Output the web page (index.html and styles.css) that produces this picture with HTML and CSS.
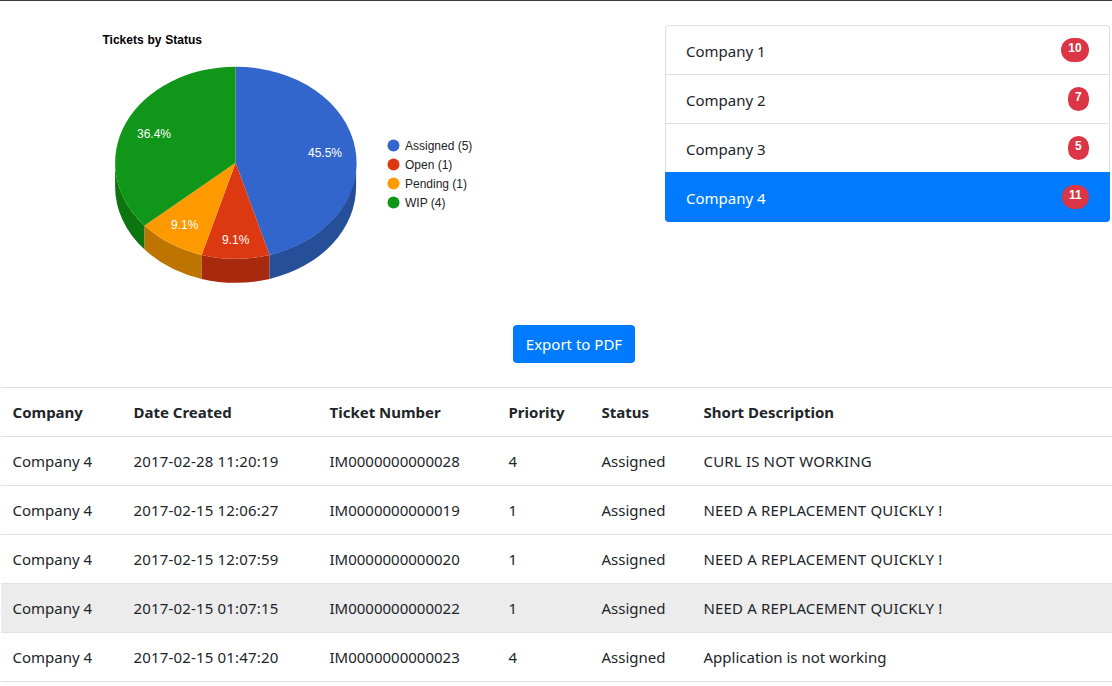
FILE: index.html
```html
<!DOCTYPE html>
<html>
<head>
    <title>Tickets by Status</title>
    <link rel="stylesheet" href="styles.css">
</head>
<body>
    <div class="top-section">
        <svg class="chart" width="640" height="300" viewBox="0 0 640 300">
            <text class="chart-title" x="102.500" y="44" word-spacing="0.5">Tickets by Status</text>

            <!-- pie sides -->
            <path fill="#0c7510" d="M115.1 162.7 A120.5 96 0 0 0 144.6 225.6 V249.6 A120.5 96 0 0 1 115.1 186.7 Z"/>
            <path fill="#bd7500" d="M144.6 225.6 A120.5 96 0 0 0 201.7 254.9 V278.9 A120.5 96 0 0 1 144.6 249.6 Z"/>
            <path fill="#a72a0e" d="M201.7 254.9 A120.5 96 0 0 0 269.6 254.9 V278.9 A120.5 96 0 0 1 201.7 278.9 Z"/>
            <path fill="#264f99" d="M269.6 254.9 A120.5 96 0 0 0 356.1 162.7 V186.7 A120.5 96 0 0 1 269.6 278.9 Z"/>

            <!-- pie top -->
            <path fill="#3366cc" d="M235.6 162.7 V66.7 A120.5 96 0 0 1 269.6 254.9 Z"/>
            <path fill="#dc3912" d="M235.6 162.7 L269.6 254.9 A120.5 96 0 0 1 201.7 254.9 Z"/>
            <path fill="#ff9900" d="M235.6 162.7 L201.7 254.9 A120.5 96 0 0 1 144.6 225.6 Z"/>
            <path fill="#109618" d="M235.6 162.7 L144.6 225.6 A120.5 96 0 0 1 235.6 66.7 Z"/>

            <text class="slice-label" x="308" y="157">45.5%</text>
            <text class="slice-label" x="222" y="244">9.1%</text>
            <text class="slice-label" x="171" y="229">9.1%</text>
            <text class="slice-label" x="137" y="138">36.4%</text>

            <circle cx="393.500" cy="145.500" r="6" fill="#3366cc"/>
            <text class="legend-label" x="405" y="150">Assigned (5)</text>
            <circle cx="393.500" cy="164.500" r="6" fill="#dc3912"/>
            <text class="legend-label" x="405" y="169">Open (1)</text>
            <circle cx="393.500" cy="183.500" r="6" fill="#ff9900"/>
            <text class="legend-label" x="405" y="188">Pending (1)</text>
            <circle cx="393.500" cy="202.500" r="6" fill="#109618"/>
            <text class="legend-label" x="405" y="207">WIP (4)</text>
        </svg>

        <ul class="company-list">
            <li class="company-item"><span class="company-name">Company 1</span> <span class="badge">10</span></li>
            <li class="company-item"><span class="company-name">Company 2</span> <span class="badge">7</span></li>
            <li class="company-item"><span class="company-name">Company 3</span> <span class="badge">5</span></li>
            <li class="company-item active"><span class="company-name">Company 4</span> <span class="badge">11</span></li>
        </ul>
    </div>

    <div class="export-row">
        <button class="export-btn" type="button">Export to PDF</button>
    </div>

    <table class="ticket-table">
        <thead>
            <tr>
                <th class="col-company">Company</th>
                <th class="col-date">Date Created</th>
                <th class="col-number">Ticket Number</th>
                <th class="col-priority">Priority</th>
                <th class="col-status">Status</th>
                <th>Short Description</th>
            </tr>
        </thead>
        <tbody>
            <tr>
                <td>Company 4</td>
                <td class="spaced">2017-02-28 11:20:19</td>
                <td>IM0000000000028</td>
                <td>4</td>
                <td>Assigned</td>
                <td class="spaced">CURL IS NOT WORKING</td>
            </tr>
            <tr>
                <td>Company 4</td>
                <td class="spaced">2017-02-15 12:06:27</td>
                <td>IM0000000000019</td>
                <td>1</td>
                <td>Assigned</td>
                <td class="spaced">NEED A REPLACEMENT QUICKLY !</td>
            </tr>
            <tr>
                <td>Company 4</td>
                <td class="spaced">2017-02-15 12:07:59</td>
                <td>IM0000000000020</td>
                <td>1</td>
                <td>Assigned</td>
                <td class="spaced">NEED A REPLACEMENT QUICKLY !</td>
            </tr>
            <tr class="hovered">
                <td>Company 4</td>
                <td class="spaced">2017-02-15 01:07:15</td>
                <td>IM0000000000022</td>
                <td>1</td>
                <td>Assigned</td>
                <td class="spaced">NEED A REPLACEMENT QUICKLY !</td>
            </tr>
            <tr>
                <td>Company 4</td>
                <td class="spaced">2017-02-15 01:47:20</td>
                <td>IM0000000000023</td>
                <td>4</td>
                <td>Assigned</td>
                <td>Application is not working</td>
            </tr>
        </tbody>
    </table>
</body>
</html>
```

FILE: styles.css
```css
body {
    font-family: "Noto Sans", sans-serif;
    font-size: 15px;
    color: #212529;
    margin: 0;
    padding: 0;
    border-top: 1px solid #343a40;
    overflow: hidden;
    height: 685px;
}

.top-section {
    display: flex;
    justify-content: space-between;
    height: 324px;
    padding-right: 2px;
}

.chart {
    display: block;
    margin-top: -1px;
}

.chart-title {
    font-family: "Liberation Sans", sans-serif;
    font-size: 12px;
    font-weight: bold;
    fill: #000000;
}

.slice-label {
    font-family: "Liberation Sans", sans-serif;
    font-size: 12px;
    fill: #ffffff;
}

.legend-label {
    font-family: "Liberation Sans", sans-serif;
    font-size: 12px;
    fill: #222222;
}

.company-list {
    list-style: none;
    width: 445px;
    height: 197px;
    box-sizing: border-box;
    margin: 24px 0 0;
    padding: 0;
    border: 1px solid #dfdfdf;
    border-bottom: none;
    border-radius: 4px;
}

.company-item {
    display: flex;
    justify-content: space-between;
    align-items: center;
    box-sizing: border-box;
    height: 49px;
    padding: 0 20px;
    border-bottom: 1px solid #dfdfdf;
}

.company-item.active {
    background-color: #007bff;
    color: #ffffff;
    border-bottom: none;
    border-radius: 0 0 4px 4px;
    margin: -1px -1px 0;
    height: 50px;
    padding: 0 21px;
}

.company-name {
    margin-top: 2px;
}

.badge {
    font-family: "Liberation Sans", sans-serif;
    font-size: 12px;
    font-weight: bold;
    line-height: 20px;
    color: #ffffff;
    background-color: #dc3545;
    border-radius: 12px;
    height: 24px;
    box-sizing: border-box;
    padding: 0 7.300px 4px;
}

.export-row {
    display: flex;
    justify-content: center;
    padding-left: 36px;
    height: 62px;
}

.export-btn {
    font-family: "Noto Sans", sans-serif;
    font-size: 15px;
    color: #ffffff;
    background-color: #007bff;
    border: none;
    border-radius: 4px;
    width: 122px;
    height: 38px;
    padding: 0;
}

.ticket-table {
    border-collapse: collapse;
    table-layout: fixed;
    width: 1111px;
    margin-left: 1px;
}

.ticket-table th,
.ticket-table td {
    height: 48px;
    padding: 0 12px 0 11.500px;
    text-align: left;
    border-top: 1px solid #dee2e6;
    border-bottom: 1px solid #dee2e6;
}

.ticket-table td.spaced {
    letter-spacing: 0.17px;
}

.col-company { width: 97.500px; }
.col-date { width: 172.500px; }
.col-number { width: 155.500px; }
.col-priority { width: 69.500px; }
.col-status { width: 78.500px; }

.hovered {
    background-color: #ececec;
}
```
